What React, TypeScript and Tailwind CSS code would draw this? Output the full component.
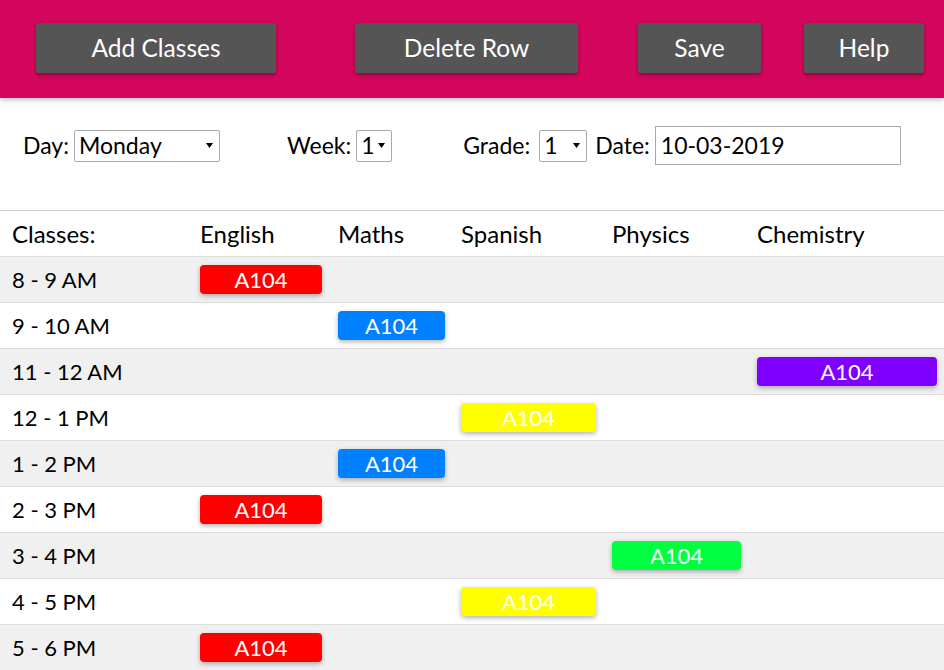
import React from "react";

const font = { fontFamily: "Lato, 'Noto Sans', sans-serif" };

type Cell = { col: number; color: string } | null;

const rows: { time: string; cell: Cell }[] = [
  { time: "8 - 9 AM", cell: { col: 0, color: "bg-[#ff0000]" } },
  { time: "9 - 10 AM", cell: { col: 1, color: "bg-[#0080ff]" } },
  { time: "11 - 12 AM", cell: { col: 4, color: "bg-[#8000ff]" } },
  { time: "12 - 1 PM", cell: { col: 2, color: "bg-[#ffff00]" } },
  { time: "1 - 2 PM", cell: { col: 1, color: "bg-[#0080ff]" } },
  { time: "2 - 3 PM", cell: { col: 0, color: "bg-[#ff0000]" } },
  { time: "3 - 4 PM", cell: { col: 3, color: "bg-[#00ff40]" } },
  { time: "4 - 5 PM", cell: { col: 2, color: "bg-[#ffff00]" } },
  { time: "5 - 6 PM", cell: { col: 0, color: "bg-[#ff0000]" } },
];

const subjects = ["English", "Maths", "Spanish", "Physics", "Chemistry"];
const colW = ["w-[138px]", "w-[123px]", "w-[151px]", "w-[145px]", "w-[195px]"];

function Arrow() {
  return (
    <svg width="7" height="5" viewBox="0 0 7 5" className="shrink-0">
      <path d="M0 0 L7 0 L3.5 5 Z" fill="#000" />
    </svg>
  );
}

function Select({ value, w }: { value: string; w: string }) {
  return (
    <div
      className={`${w} h-[32px] border border-[#a9a9a9] rounded-[2px] bg-white flex items-center pl-[4px] pr-[6px] justify-between`}
    >
      <span className="text-[23px] leading-none text-black">{value}</span>
      <Arrow />
    </div>
  );
}

const btn =
  "h-[50px] bg-[#555555] text-white text-[24.5px] rounded-[3px] shadow-[0_2px_4px_rgba(0,0,0,0.35)]";

export default function App() {
  return (
    <div className="w-[944px] h-[670px] overflow-hidden bg-white text-black" style={font}>
      <div className="h-[98px] bg-[#d5065e] flex items-start pt-[23px] shadow-[0_2px_5px_rgba(0,0,0,0.25)] relative z-10">
        <button className={`ml-[36px] w-[240px] ${btn}`}>Add Classes</button>
        <button className={`ml-[79px] w-[223px] ${btn}`}>Delete Row</button>
        <button className={`ml-[60px] w-[123px] ${btn}`}>Save</button>
        <button className={`ml-[43px] w-[120px] ${btn}`}>Help</button>
      </div>

      <div className="pt-[28px] pl-[23px] h-[112px] flex items-start">
        <div className="h-[39px] flex items-center text-[23px]">
          <span>Day:</span>
          <div className="ml-[5px]">
            <Select value="Monday" w="w-[146px]" />
          </div>
          <span className="ml-[67px]">Week:</span>
          <div className="ml-[5px]">
            <Select value="1" w="w-[36px]" />
          </div>
          <span className="ml-[71px]">Grade:</span>
          <div className="ml-[9px]">
            <Select value="1" w="w-[48px]" />
          </div>
          <span className="ml-[8px]">Date:</span>
          <div className="ml-[5px] w-[246px] h-[39px] border border-[#a9a9a9] flex items-center pl-[5px] text-[23px]">
            10-03-2019
          </div>
        </div>
      </div>

      <div className="border-t border-[#cccccc]">
        <div className="h-[46px] flex items-center border-b border-[#dddddd] text-[24px]">
          <div className="w-[192px] pl-[12px]">Classes:</div>
          {subjects.map((s, i) => (
            <div key={s} className={`${colW[i]} px-[8px]`}>
              {s}
            </div>
          ))}
        </div>
        {rows.map((r, ri) => (
          <div
            key={ri}
            className={`h-[46px] flex items-center border-b border-[#dddddd] text-[22px] ${
              ri % 2 === 0 ? "bg-[#f0f0f0]" : "bg-white"
            }`}
          >
            <div className="w-[192px] pl-[12px]">{r.time}</div>
            {subjects.map((s, i) => (
              <div key={s} className={`${colW[i]} ${i === 4 ? "pl-[8px] pr-[7px]" : "px-[8px]"}`}>
                {r.cell && r.cell.col === i ? (
                  <div
                    className={`${r.cell.color} h-[29px] rounded-[4px] text-white text-[22px] leading-none flex items-center justify-center shadow-[0_2px_5px_rgba(0,0,0,0.3)]`}
                  >
                    A104
                  </div>
                ) : null}
              </div>
            ))}
          </div>
        ))}
      </div>
    </div>
  );
}
